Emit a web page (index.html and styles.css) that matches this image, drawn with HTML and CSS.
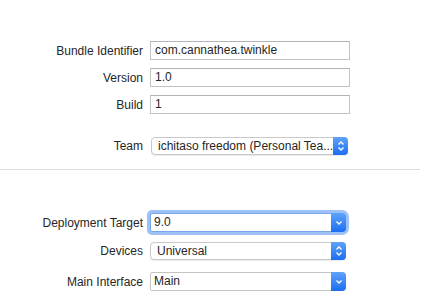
FILE: index.html
```html
<!DOCTYPE html>
<html lang="en">
<head>
  <meta charset="UTF-8">
  <title>General - Identity</title>
  <link rel="stylesheet" href="styles.css">
</head>
<body>
  <div class="pane">
    <div class="identity">
      <div class="row">
        <label class="label">Bundle Identifier</label>
        <div class="field">com.cannathea.twinkle</div>
      </div>
      <div class="row">
        <label class="label">Version</label>
        <div class="field">1.0</div>
      </div>
      <div class="row">
        <label class="label">Build</label>
        <div class="field">1</div>
      </div>
      <div class="row team-row">
        <label class="label">Team</label>
        <div class="popup wide">
          <span class="popup-text">ichitaso freedom (Personal Tea...</span>
          <span class="arrows">
            <svg width="8" height="12" viewBox="0 0 8 12"><path d="M1.5 4.5 L4 2 L6.5 4.5 M1.5 7.5 L4 10 L6.5 7.5" fill="none" stroke="#fff" stroke-width="1.3"/></svg>
          </span>
        </div>
      </div>
    </div>

    <div class="separator"></div>

    <div class="deployment">
      <div class="row">
        <label class="label">Deployment Target</label>
        <div class="combo focused">
          <span class="combo-text">9.0</span>
          <span class="arrows">
            <svg width="8" height="6" viewBox="0 0 8 6"><path d="M1.5 1.5 L4 4 L6.5 1.5" fill="none" stroke="#fff" stroke-width="1.3"/></svg>
          </span>
        </div>
      </div>
      <div class="row">
        <label class="label">Devices</label>
        <div class="popup">
          <span class="popup-text">Universal</span>
          <span class="arrows">
            <svg width="8" height="12" viewBox="0 0 8 12"><path d="M1.5 4.5 L4 2 L6.5 4.5 M1.5 7.5 L4 10 L6.5 7.5" fill="none" stroke="#fff" stroke-width="1.3"/></svg>
          </span>
        </div>
      </div>
      <div class="row">
        <label class="label">Main Interface</label>
        <div class="combo">
          <span class="combo-text">Main</span>
          <span class="arrows">
            <svg width="8" height="6" viewBox="0 0 8 6"><path d="M1.5 1.5 L4 4 L6.5 1.5" fill="none" stroke="#fff" stroke-width="1.3"/></svg>
          </span>
        </div>
      </div>
    </div>
  </div>
</body>
</html>
```

FILE: styles.css
```css
body {
  margin: 0;
  background: #fff;
  font-family: 'Liberation Sans', Arial, sans-serif;
  font-size: 12px;
  color: #262626;
}
.pane {
  padding-top: 41px;
}
.row {
  display: flex;
  align-items: center;
  height: 19px;
  margin-bottom: 8px;
}
.label {
  width: 143px;
  margin-right: 7px;
  text-align: right;
  white-space: nowrap;
}
.field {
  width: 200px;
  height: 19px;
  box-sizing: border-box;
  border: 1px solid #c2c2c2;
  border-top-color: #b4b4b4;
  padding-left: 4px;
  line-height: 17px;
  background: #fff;
}
.identity .row:nth-child(3) {
  margin-bottom: 22px;
}
.team-row {
  margin-bottom: 0;
}
.popup {
  display: flex;
  align-items: stretch;
  width: 196px;
  height: 18px;
  box-sizing: border-box;
  border: 1px solid #c9c9c9;
  border-radius: 4px;
  background: #fff;
  box-shadow: 0 1px 0 rgba(0, 0, 0, 0.08);
}
.popup.wide {
  width: 197px;
  margin-left: 1px;
}
.popup-text {
  flex: 1;
  padding-left: 6px;
  line-height: 16px;
  overflow: hidden;
  white-space: nowrap;
}
.popup .arrows {
  width: 15px;
  margin: -1px -1px -1px 0;
  border-radius: 0 4px 4px 0;
  background: linear-gradient(to bottom, #5ea3f9, #1c6ef2);
  display: flex;
  justify-content: center;
  align-items: center;
}
.separator {
  height: 1px;
  width: 420px;
  background: #dcdcdc;
  margin: 14px 0 43px;
}
.combo {
  display: flex;
  align-items: stretch;
  width: 196px;
  height: 19px;
  box-sizing: border-box;
  border: 1px solid #c4c4c4;
  border-radius: 2px 4px 4px 2px;
  background: #fff;
}
.combo.focused {
  border-color: #7aa7ea;
  box-shadow: 0 0 0 3px rgba(124, 172, 243, 0.75);
}
.combo-text {
  flex: 1;
  padding-left: 3px;
  line-height: 17px;
}
.combo .arrows {
  width: 15px;
  margin: -1px -1px -1px 0;
  border-radius: 0 4px 4px 0;
  background: linear-gradient(to bottom, #5ea3f9, #1c6ef2);
  display: flex;
  justify-content: center;
  align-items: center;
}
.deployment .row:first-child {
  margin-bottom: 10px;
}
.deployment .row:nth-child(2) {
  height: 18px;
  margin-bottom: 12px;
}
```
